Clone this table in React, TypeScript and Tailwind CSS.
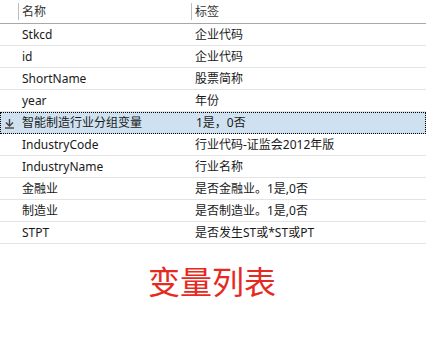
import React from "react";

const rows: [string, string][] = [
  ["Stkcd", "企业代码"],
  ["id", "企业代码"],
  ["ShortName", "股票简称"],
  ["year", "年份"],
  ["智能制造行业分组变量", "1是，0否"],
  ["IndustryCode", "行业代码-证监会2012年版"],
  ["IndustryName", "行业名称"],
  ["金融业", "是否金融业。1是,0否"],
  ["制造业", "是否制造业。1是,0否"],
  ["STPT", "是否发生ST或*ST或PT"],
];

const font = { fontFamily: '"Noto Sans", "Noto Sans CJK SC", sans-serif' };

export default function App() {
  return (
    <div className="w-[428px] h-[345px] bg-white text-[12px] text-[#1a1a1a]" style={font}>
      <div className="w-[426px]">
        <div className="flex h-[24px] items-center border-b border-[#a8a8a8] text-[#333]">
          <div className="w-[18px] shrink-0" />
          <div className="w-[173px] shrink-0 h-[17px] border-l border-[#bdbdbd] pl-[3px] flex items-center">名称</div>
          <div className="flex-1 h-[17px] border-l border-[#bdbdbd] pl-[3px] flex items-center">标签</div>
        </div>
        {rows.map(([n, l], i) => {
          const sel = i === 4;
          return (
            <div
              key={i}
              className={
                sel
                  ? "flex h-[22px] items-center bg-[#cfe1f0] border border-dotted border-black"
                  : "flex h-[22px] items-center border-b border-[#e3e3e3]"
              }
            >
              <div className="w-[18px] shrink-0 flex items-center justify-center">
                {sel && (
                  <svg width="11" height="11" viewBox="0 0 11 11" className="ml-[-2px]">
                    <path d="M5.5 1 V7.5" stroke="#444" strokeWidth="1.4" />
                    <path d="M2 4.5 L5.5 8 L9 4.5" stroke="#444" strokeWidth="1.4" fill="none" />
                    <path d="M1 10 H10" stroke="#444" strokeWidth="1.4" />
                  </svg>
                )}
              </div>
              <div className={sel ? "w-[173px] shrink-0 pl-[3px]" : "w-[173px] shrink-0 pl-[4px]"}>{n}</div>
              <div className="flex-1 pl-[4px]">{l}</div>
            </div>
          );
        })}
      </div>
      <div className="flex justify-center mt-[16px] pl-[0px]">
        <span className="text-[32px] leading-[40px] text-[#e52a22] ml-[-4px]" style={{ fontFamily: '"Noto Sans CJK SC", sans-serif' }}>
          变量列表
        </span>
      </div>
    </div>
  );
}
